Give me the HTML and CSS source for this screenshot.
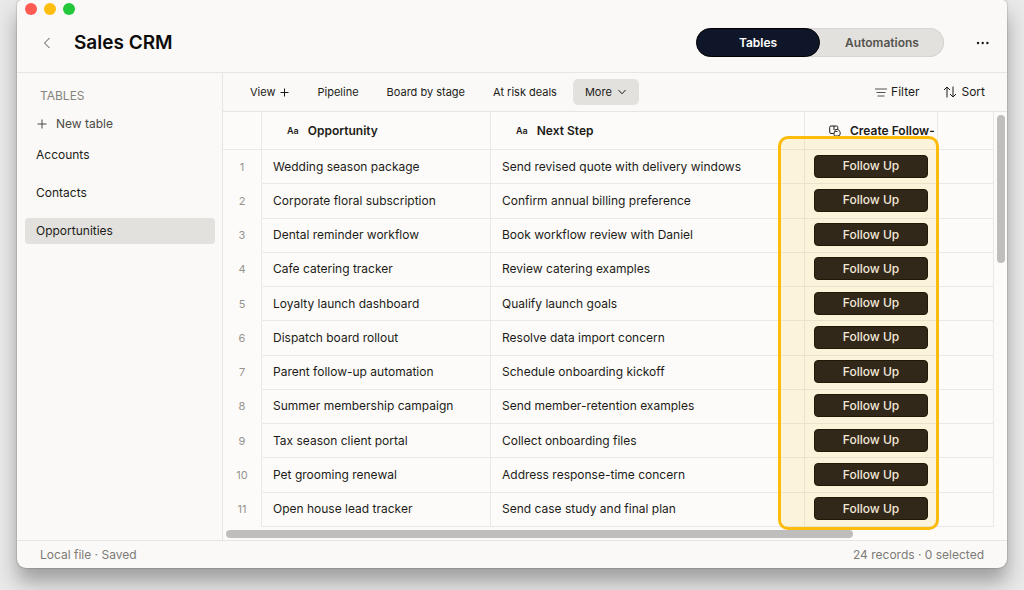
FILE: index.html
```html
<!DOCTYPE html>
<html lang="en">
<head>
<meta charset="utf-8">
<title>Sales CRM</title>
<link rel="stylesheet" href="styles.css">
</head>
<body>
<div class="window">
  <header class="titlebar">
    <div class="lights"><span class="light red"></span><span class="light yellow"></span><span class="light green"></span></div>
    <div class="title-row">
      <button class="icon-btn back" aria-label="Back"><svg width="10" height="14" viewBox="0 0 10 14"><path d="M7.500 2L2.500 7l5 5"/></svg></button>
      <h1 class="title">Sales CRM</h1>
      <div class="switch">
        <button class="switch-item active">Tables</button>
        <button class="switch-item">Automations</button>
      </div>
      <button class="icon-btn dots" aria-label="More options"><svg width="14" height="4" viewBox="0 0 14 4"><circle cx="2" cy="2" r="1.200"/><circle cx="6.700" cy="2" r="1.200"/><circle cx="11.400" cy="2" r="1.200"/></svg></button>
    </div>
  </header>
  <div class="body">
    <nav class="sidebar">
      <h2 class="side-title">TABLES</h2>
      <button class="new-table"><svg width="10" height="10" viewBox="0 0 10 10"><path d="M5 .5v9M.5 5h9"/></svg>New table</button>
      <div class="side-list">
        <a class="side-item" href="#">Accounts</a>
        <a class="side-item" href="#">Contacts</a>
        <a class="side-item selected" href="#">Opportunities</a>
      </div>
    </nav>
    <main class="main">
      <div class="toolbar">
        <button class="tab">View <svg width="9" height="9" viewBox="0 0 9 9"><path d="M4.500 .5v8M.5 4.500h8"/></svg></button>
        <button class="tab">Pipeline</button>
        <button class="tab">Board by stage</button>
        <button class="tab">At risk deals</button>
        <button class="tab more">More <svg width="10" height="6" viewBox="0 0 10 6"><path d="M1.500 1L5 4.800 8.500 1"/></svg></button>
        <div class="tools">
          <button class="tool"><svg width="12" height="9" viewBox="0 0 12 9"><path class="thin" d="M0 1h12M1.500 4.500h9M2.500 8h7"/></svg>Filter</button>
          <button class="tool"><svg width="14" height="12" viewBox="0 0 14 12"><path d="M4 11.500V1M1 4l3-3 3 3M10 .5V11M7 8l3 3 3-3"/></svg>Sort</button>
        </div>
      </div>
      <div class="sheet">
        <div class="grid-wrap">
          <table class="grid">
            <colgroup><col class="c-num"><col class="c-opp"><col class="c-step"><col class="c-action"><col class="c-end"></colgroup>
            <thead><tr>
              <th></th>
              <th><span class="head"><span class="aa">Aa</span>Opportunity</span></th>
              <th><span class="head"><span class="aa">Aa</span>Next Step</span></th>
              <th><span class="head action"><svg width="12" height="12" viewBox="0 0 12 12"><path d="M4.500 8.500H2A1.300 1.300 0 0 1 .7 7.200V2.300A1.300 1.300 0 0 1 2 1h5.500A1.300 1.300 0 0 1 8.800 2.300V4M5 1v4"/><path d="M6 6.500V5.500A1 1 0 0 1 7 4.500h1.800a1.500 1.500 0 0 1 1 .5l1 1.600a3 3 0 0 1 .4 1.400v.8A2.300 2.300 0 0 1 9 11H6.500A1.500 1.500 0 0 1 5 9.500V8a1.500 1.500 0 0 1 1.500-1.500h2"/></svg>Create Follow-</span></th>
              <th></th>
            </tr></thead>
            <tbody>
              <tr><td>1</td><td>Wedding season package</td><td>Send revised quote with delivery windows</td><td><button class="follow">Follow Up</button></td><td></td></tr>
              <tr><td>2</td><td>Corporate floral subscription</td><td>Confirm annual billing preference</td><td><button class="follow">Follow Up</button></td><td></td></tr>
              <tr><td>3</td><td>Dental reminder workflow</td><td>Book workflow review with Daniel</td><td><button class="follow">Follow Up</button></td><td></td></tr>
              <tr><td>4</td><td>Cafe catering tracker</td><td>Review catering examples</td><td><button class="follow">Follow Up</button></td><td></td></tr>
              <tr><td>5</td><td>Loyalty launch dashboard</td><td>Qualify launch goals</td><td><button class="follow">Follow Up</button></td><td></td></tr>
              <tr><td>6</td><td>Dispatch board rollout</td><td>Resolve data import concern</td><td><button class="follow">Follow Up</button></td><td></td></tr>
              <tr><td>7</td><td>Parent follow-up automation</td><td>Schedule onboarding kickoff</td><td><button class="follow">Follow Up</button></td><td></td></tr>
              <tr><td>8</td><td>Summer membership campaign</td><td>Send member-retention examples</td><td><button class="follow">Follow Up</button></td><td></td></tr>
              <tr><td>9</td><td>Tax season client portal</td><td>Collect onboarding files</td><td><button class="follow">Follow Up</button></td><td></td></tr>
              <tr><td>10</td><td>Pet grooming renewal</td><td>Address response-time concern</td><td><button class="follow">Follow Up</button></td><td></td></tr>
              <tr><td>11</td><td>Open house lead tracker</td><td>Send case study and final plan</td><td><button class="follow">Follow Up</button></td><td></td></tr>
            </tbody>
          </table>
          <div class="highlight"></div>
        </div>
        <div class="vscroll"><div class="vthumb"></div></div>
        <div class="hscroll"><div class="hthumb"></div></div>
      </div>
    </main>
  </div>
  <footer class="status"><span>Local file · Saved</span><span>24 records · 0 selected</span></footer>
</div>
</body>
</html>
```
FILE: styles.css
```css
* { box-sizing: border-box; }
body {
  margin: 0;
  height: 100vh;
  padding: 0 17px 22px 17px;
  display: flex;
  background: #e9e9e9;
  color: #1c1b18;
  font: 12px/16px Inter, "Liberation Sans", sans-serif;
  overflow: hidden;
}
button {
  font: inherit;
  color: inherit;
  border: 0;
  padding: 0;
  background: none;
  display: inline-flex;
  align-items: center;
}
svg { fill: none; stroke: currentColor; flex: none; }
.window {
  flex: 1;
  min-width: 0;
  display: flex;
  flex-direction: column;
  background: #faf9f7;
  border-radius: 0 0 9px 9px;
  border-top-left-radius: 5px;
  border-top-right-radius: 5px;
  overflow: hidden;
  box-shadow: 0 0 1px 1px rgba(0,0,0,.12), 0 14px 20px rgba(0,0,0,.32);
}
.titlebar { border-bottom: 1px solid #e6e5e2; padding-bottom: 2px; }
.lights { display: flex; gap: 7px; padding: 3px 0 0 8px; }
.light { width: 12px; height: 12px; border-radius: 50%; }
.red { background: #ff5b52; }
.yellow { background: #ffbd10; }
.green { background: #22c73a; }
.title-row { display: flex; align-items: center; height: 55px; padding: 0 17px 0 25px; }
.back { color: #55534e; }
.title { margin: 0 0 0 22px; font-size: 19px; line-height: 24px; font-weight: 600; color: #0c0c0a; }
.switch {
  margin-left: auto;
  display: flex;
  width: 248px;
  height: 29px;
  border-radius: 15px;
  background: #e2e1dd;
  box-shadow: inset 0 0 0 1px #d6d5d1;
}
.switch-item { flex: 1; justify-content: center; font-weight: 600; color: #55534f; border: 1px solid transparent; border-radius: 15px; }
.switch-item.active { background: #101629; color: #fff; border-color: #000; }
.dots { margin-left: 32px; color: #1c1b18; }
.dots svg { fill: currentColor; stroke: none; }
.body { flex: 1; min-height: 0; display: flex; }
.sidebar { width: 206px; padding: 15px 7px 0 8px; border-right: 1px solid #e6e5e2; }
.side-title { margin: 0 0 12px 15px; font-size: 12px; line-height: 16px; font-weight: 400; color: #85837e; }
.new-table { gap: 9px; margin-left: 12px; height: 16px; color: #4b4945; }
.side-list { display: flex; flex-direction: column; gap: 12px; margin-top: 9px; }
.side-item { display: block; padding: 5px 11px; border-radius: 4px; color: inherit; text-decoration: none; }
.side-item.selected { background: #e2e1dd; }
.main { flex: 1; min-width: 0; display: flex; flex-direction: column; }
.toolbar { height: 39px; display: flex; align-items: center; padding: 0 22px 0 15px; border-bottom: 1px solid #e6e5e2; }
.tab { height: 26px; padding: 0 12px; margin-right: 4px; gap: 5px; border-radius: 5px; font-size: 11px; white-space: nowrap; }
.tab.more { background: #e2e1dd; }
.tools { margin-left: auto; display: flex; gap: 24px; }
.tool { gap: 4px; }
.thin { stroke: #55534f; }
.sheet {
  flex: 1;
  min-height: 0;
  display: grid;
  grid-template-columns: 1fr 13px;
  grid-template-rows: 1fr 13px;
  background: #fcfbf9;
}
.grid-wrap { position: relative; min-width: 0; }
.grid { width: 100%; height: 100%; table-layout: fixed; border-collapse: separate; border-spacing: 0; font-size: 12px; }
.c-num { width: 39px; }
.c-opp { width: 229px; }
.c-action { width: 133px; }
.c-end { width: 56px; }
.grid th, .grid td { padding: 0 11px; border-right: 1px solid #e9e8e5; border-bottom: 1px solid #e9e8e5; text-align: left; white-space: nowrap; }
.grid th { height: 38px; padding: 0; font-weight: 600; }
.grid td:first-child { padding: 0; text-align: center; font-size: 11px; color: #96948f; border-bottom-color: transparent; }
.grid td:nth-child(4) { padding: 0 9px 1px; }
.head { display: flex; align-items: center; gap: 9px; padding-left: 25px; }
.head.action { padding-left: 24px; }
.aa { font-size: 9px; }
.follow {
  display: flex;
  justify-content: center;
  width: 100%;
  height: 23px;
  border-radius: 4px;
  border: 1px solid #000;
  background: #14121a;
  color: #f2f1f4;
  font-weight: 500;
}
.highlight {
  position: absolute;
  top: 24px;
  right: 55px;
  bottom: -3px;
  width: 161px;
  border: 3px solid #fdbc0c;
  border-radius: 10px;
  background: rgba(255,193,20,.13);
  pointer-events: none;
}
.vscroll { padding: 3px 3px 0; }
.vthumb { width: 8px; height: 148px; border-radius: 4px; background: #bfbebd; }
.hscroll { padding: 3px 3px 0; }
.hthumb { width: 627px; height: 8px; border-radius: 4px; background: #bfbebd; }
.status { display: flex; justify-content: space-between; padding: 6px 23px 5px; border-top: 1px solid #e6e5e2; color: #7d7b77; }
```
